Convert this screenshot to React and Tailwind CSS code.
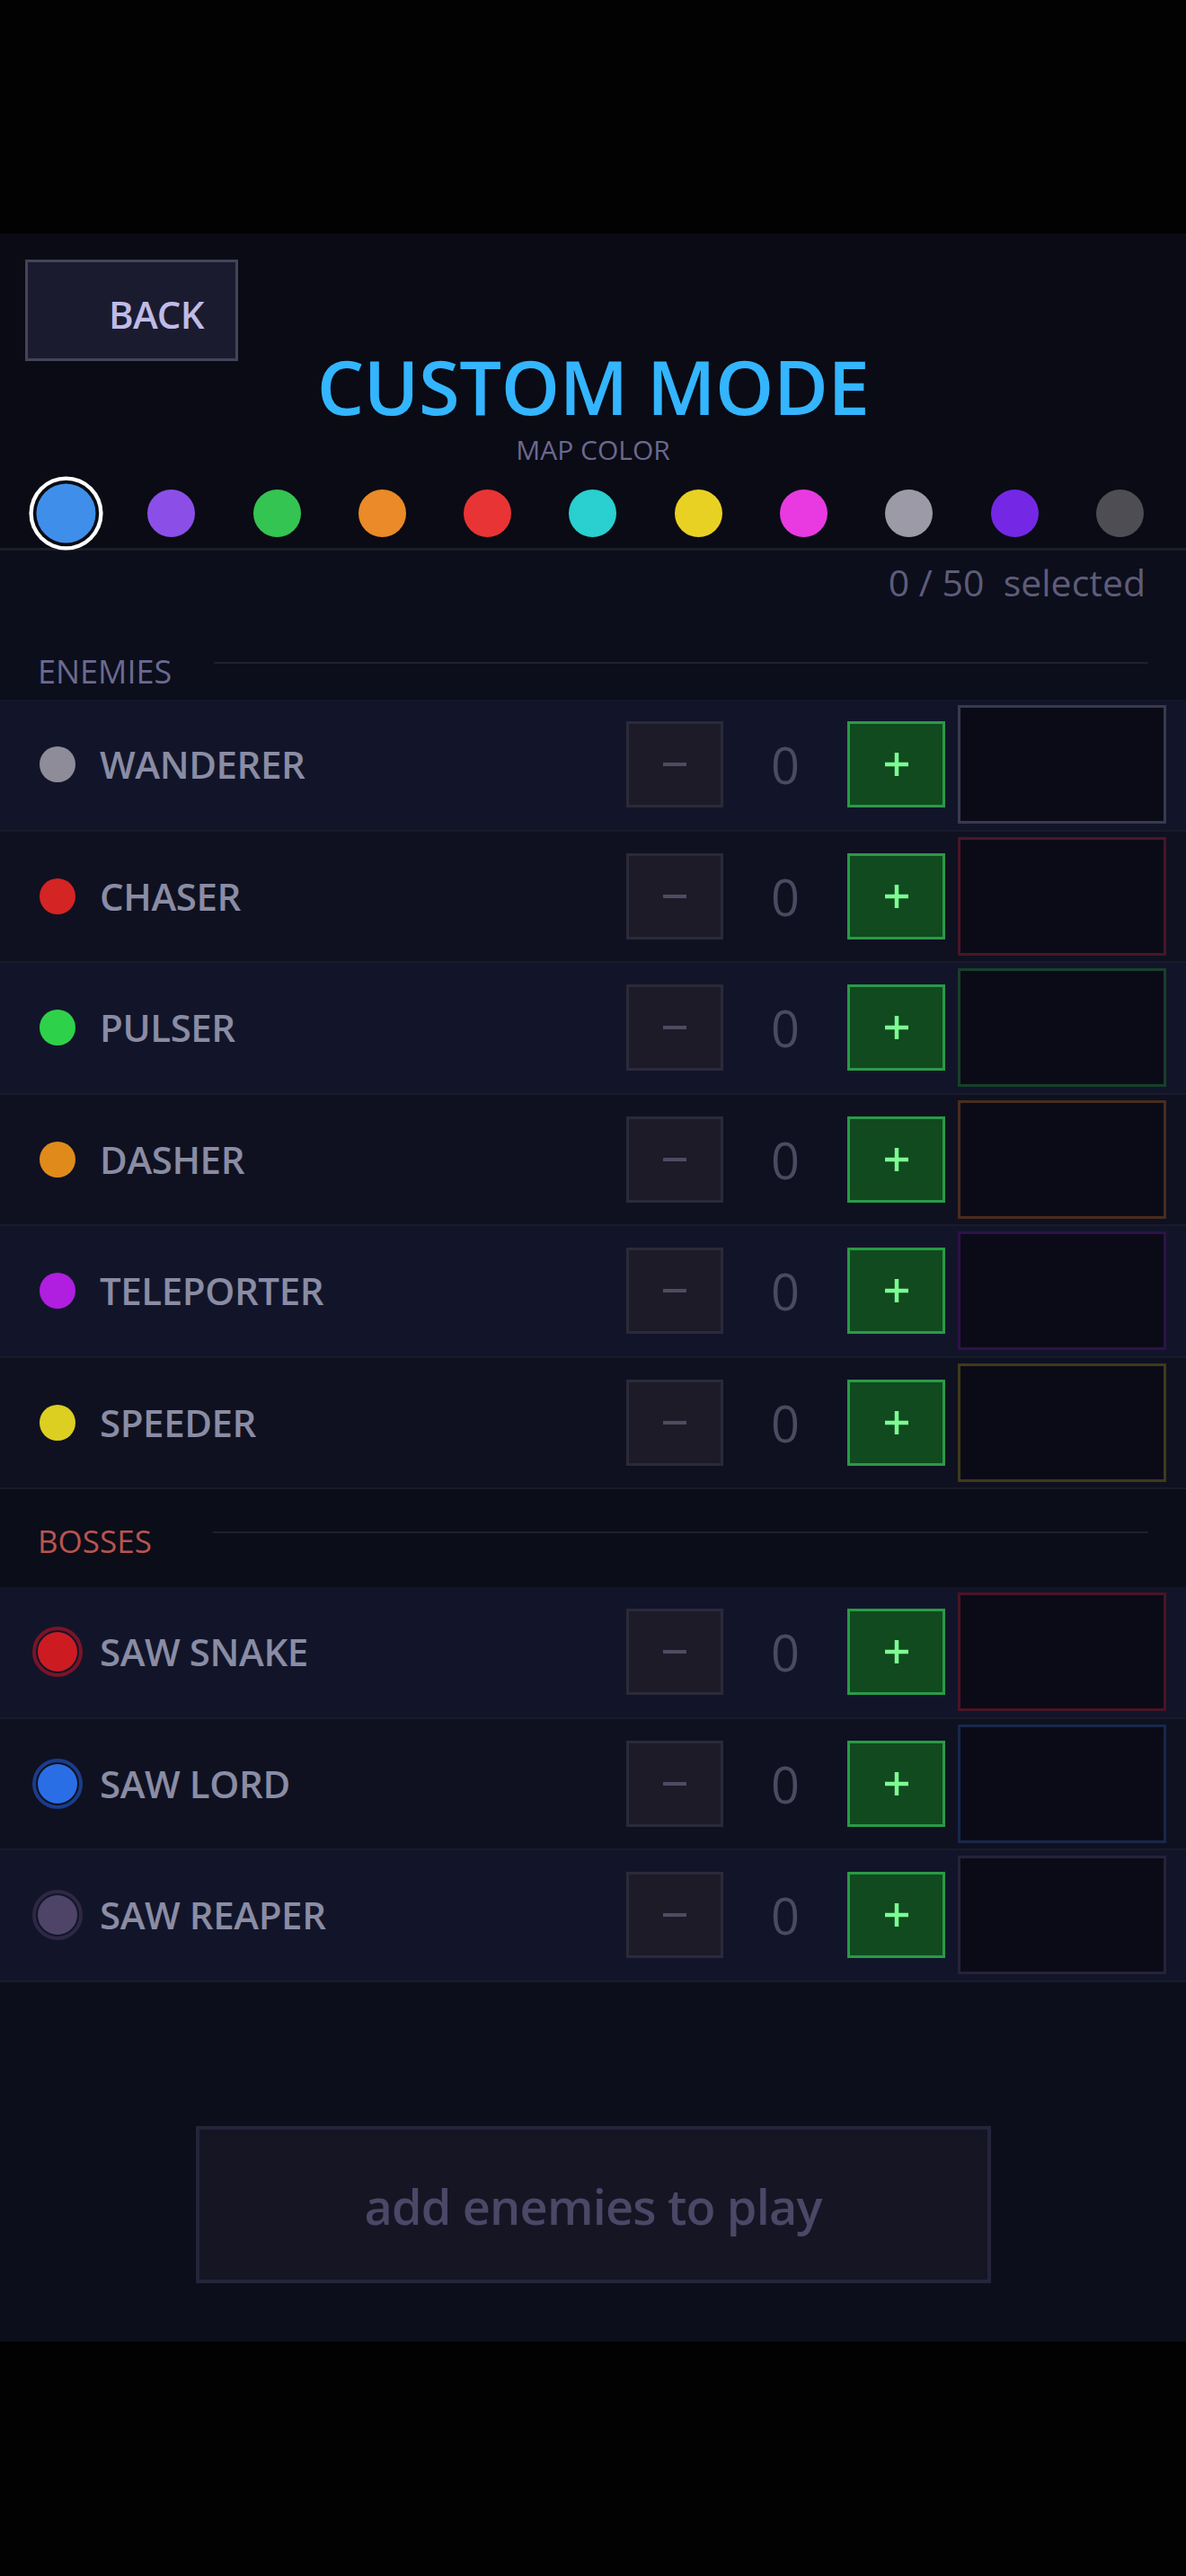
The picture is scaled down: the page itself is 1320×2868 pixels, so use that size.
import { useState } from 'react';

const MAP_COLORS = [
  '#3f8fea', '#8b4fe8', '#34c452', '#ea8a28', '#e83434', '#2acfcf',
  '#e9d124', '#e83ae0', '#9c9aa6', '#7428e6', '#4e4d54',
];

const ENEMIES = [
  { name: 'WANDERER', color: 'bg-[#8d8c98]', box: 'border-[#383a4e]' },
  { name: 'CHASER', color: 'bg-[#d42424]', box: 'border-[#4a1626]' },
  { name: 'PULSER', color: 'bg-[#2ed24a]', box: 'border-[#17402a]' },
  { name: 'DASHER', color: 'bg-[#e08a1c]', box: 'border-[#4a2c1e]' },
  { name: 'TELEPORTER', color: 'bg-[#b01ee0]', box: 'border-[#2e1248]' },
  { name: 'SPEEDER', color: 'bg-[#dccf22]', box: 'border-[#403a1a]' },
];

const BOSSES = [
  { name: 'SAW SNAKE', color: 'bg-[#cc1c22]', ring: 'border-[#7a1428]', box: 'border-[#4a1424]' },
  { name: 'SAW LORD', color: 'bg-[#2a6ee6]', ring: 'border-[#1a3c8a]', box: 'border-[#18284e]' },
  { name: 'SAW REAPER', color: 'bg-[#4e4468]', ring: 'border-[#2e2844]', box: 'border-[#25233a]' },
];

const Row = ({ item, index, boss }) => (
  <div
    className={`flex items-center h-[146.5px] border-b-2 border-[#191b2b] pl-[44px] pr-[22px] ${
      index % 2 === 0 ? 'bg-[#121529]' : 'bg-[#0f1120]'
    }`}
  >
    <div className="w-[40px] h-[40px] flex items-center justify-center shrink-0">
      {boss ? (
        <div className={`w-[56px] h-[56px] shrink-0 rounded-full border-4 ${item.ring} p-[2px]`}>
          <div className={`w-full h-full rounded-full ${item.color}`}></div>
        </div>
      ) : (
        <div className={`w-[40px] h-[40px] rounded-full ${item.color}`}></div>
      )}
    </div>
    <span className="ml-[27px] text-[42px] leading-none font-semibold tracking-[-0.4px] text-[#8a8ca4]">{item.name}</span>
    <div className="ml-auto flex items-center">
      <button
        type="button"
        className="w-[108px] h-[96px] border-[3px] border-[#2a2a3a] bg-[#1c1b27] flex items-center justify-center"
      >
        <svg width="26" height="6" viewBox="0 0 26 6">
          <rect x="0" y="1" width="26" height="4" fill="#4d4c62" />
        </svg>
      </button>
      <span className="w-[138px] text-center text-[56px] leading-none text-[#4a4a60]">0</span>
      <button
        type="button"
        className="w-[109px] h-[96px] border-[3px] border-[#2a9a48] bg-[#114a1e] flex items-center justify-center"
      >
        <svg width="26" height="26" viewBox="0 0 26 26">
          <path d="M13 0 V26 M0 13 H26" stroke="#7dfc94" strokeWidth="4.5" />
        </svg>
      </button>
      <div className={`ml-[14px] w-[232px] h-[132px] border-[3px] ${item.box} bg-[#0b0b18]`}></div>
    </div>
  </div>
);

export default function App() {
  const [mapColor, setMapColor] = useState(0);

  return (
    <div className="w-[1320px] h-[2868px] bg-[#020203] font-['Open_Sans',sans-serif]">
      <div className="h-[260px]"></div>
      <div className="h-[2347px] flex flex-col bg-[#0c0e1b]">
        {/* Header */}
        <div className="bg-[#0a0b14] flex flex-col border-b-[3px] border-[#1c1d28] pb-[12px]">
          <div className="pt-[29px] pl-[28px]">
            <button
              type="button"
              className="w-[237px] h-[113px] border-[3px] border-[#44435a] bg-[#1b1b30] text-[#bfbbe6] text-[42px] leading-none font-semibold tracking-[-0.8px] flex items-center pl-[90px] pt-[8px]"
            >
              BACK
            </button>
          </div>
          <h1 className="-mt-[14px] text-center text-[83px] leading-none font-semibold tracking-[-0.4px] text-[#33b5ff]">CUSTOM MODE</h1>
          <p className="mt-[15px] text-center text-[30px] leading-none text-[#6b6890]">MAP COLOR</p>
          <div className="mt-[29px] h-[53px] px-[47px] flex items-center justify-between">
            {MAP_COLORS.map((c, i) => (
              <button
                key={c}
                type="button"
                onClick={() => setMapColor(i)}
                style={{ backgroundColor: c }}
                className={`w-[53px] h-[53px] rounded-full ${
                  mapColor === i ? 'scale-[1.245] ring-[3.5px] ring-white ring-offset-[3px] ring-offset-[#0a0b14]' : ''
                }`}
              ></button>
            ))}
          </div>
        </div>

        {/* Count */}
        <p className="mt-[15px] pr-[45px] text-right text-[41px] leading-none text-[#5e5c7a] whitespace-pre">0 / 50  selected</p>

        {/* Enemies */}
        <div className="mt-[61px] mb-[13px] px-[42px] flex items-start">
          <span className="text-[36px] leading-none text-[#6b6a90]">ENEMIES</span>
          <div className="flex-1 ml-[47px] mt-[7px] h-[2px] bg-[#1e2030]"></div>
        </div>
        <div>
          {ENEMIES.map((e, i) => (
            <Row key={e.name} item={e} index={i} />
          ))}
        </div>

        {/* Bosses */}
        <div className="bg-[#0b0d18] pt-[40px] pb-[34px] px-[42px] flex items-start">
          <span className="text-[35px] leading-none text-[#b85450]">BOSSES</span>
          <div className="flex-1 ml-[68px] mt-[7px] h-[2px] bg-[#1e2030]"></div>
        </div>
        <div>
          {BOSSES.map((b, i) => (
            <Row key={b.name} item={b} index={i} boss />
          ))}
        </div>

        {/* Play */}
        <div className="mt-[160px] flex justify-center">
          <button
            type="button"
            disabled
            className="w-[885px] h-[175px] border-4 border-[#24243a] bg-[#151524] text-[54px] leading-none font-semibold tracking-[-0.8px] text-[#4a4866] pt-[4px]"
          >
            add enemies to play
          </button>
        </div>
      </div>
    </div>
  );
}
